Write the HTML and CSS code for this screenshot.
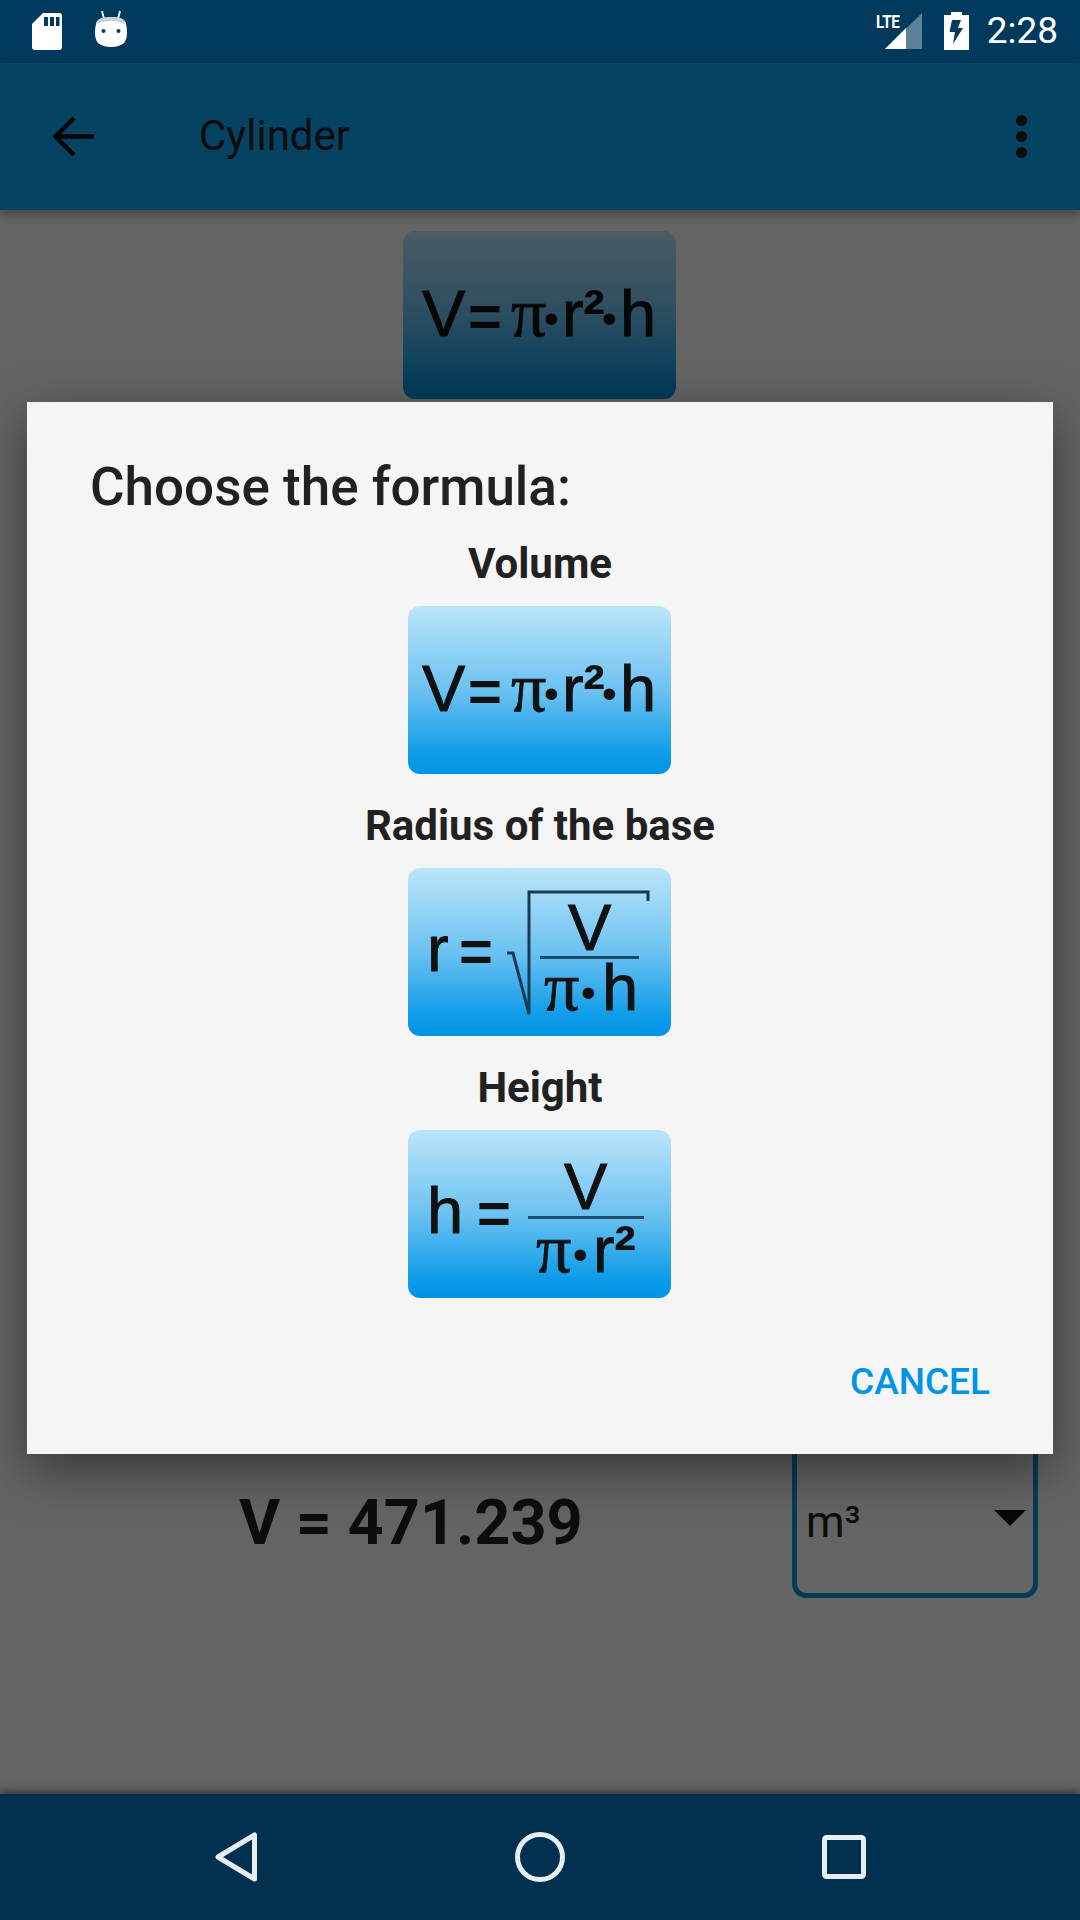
FILE: index.html
```html
<!DOCTYPE html>
<html lang="en">
<head>
<meta charset="utf-8">
<title>Cylinder</title>
<link rel="stylesheet" href="styles.css">
</head>
<body>
<div class="screen">
  <header class="status-bar">
    <div class="status-group">
      <svg class="ic-sd" viewBox="0 0 30 37"><path d="M11 0H27a3 3 0 0 1 3 3V34a3 3 0 0 1-3 3H3a3 3 0 0 1-3-3V11Z" fill="#fff"/><path d="M12 4h4v9h-4ZM18 4h4v9h-4ZM24 4h3.500v9H24Z" fill="#013a5c"/></svg>
      <svg class="ic-droid" viewBox="0 0 32 37"><path d="M7 1 9 9M25 1 23 9" stroke="#fff" stroke-width="1.800"/><path d="M1 14Q2 7 16 7T31 14C33 22 32 30 29 33Q24 37 16 37T3 33C0 30-1 22 1 14Z" fill="#fff"/><path d="M1 14Q2 7 16 7T31 14Q24 11 16 11T1 14Z" fill="#c5d3da"/><circle cx="8.500" cy="21" r="2" fill="#013a5c"/><circle cx="23.500" cy="21" r="2" fill="#013a5c"/></svg>
    </div>
    <div class="status-group right">
      <div class="signal">
        <span class="lte">LTE</span>
        <svg class="ic-signal" viewBox="0 0 37 36"><path d="M37 0V36H0Z" fill="#5a8199"/><path d="M21 15V36H0Z" fill="#fff"/></svg>
      </div>
      <svg class="ic-battery" viewBox="0 0 25 38"><path d="M7 0H18V3H25V38H0V3H7Z" fill="#fff"/><path d="M8 8 17 8 14 16H19L9 32 11 20H5.500Z" fill="#013a5c"/></svg>
      <span class="time">2:28</span>
    </div>
  </header>

  <div class="app">
    <div class="app-bar">
      <svg class="ic-back" viewBox="0 0 41 41"><path d="M41 20.500H4M21 2 2.500 20.500 21 39" fill="none" stroke="#111" stroke-width="4.500"/></svg>
      <h1 class="app-title">Cylinder</h1>
      <div class="overflow"><i></i><i></i><i></i></div>
    </div>
    <main class="content">
      <div class="tile tile-main">
        <svg class="formula" viewBox="0 0 263 168"><text class="f" x="14" y="105">V</text><text class="e" x="60" y="105">=</text><text class="s" x="103" y="105">π</text><text class="d" x="136" y="102">•</text><text class="f" x="154" y="105">r</text><text class="t" x="175" y="105">²</text><text class="d" x="194" y="102">•</text><text class="f" x="212" y="105">h</text></svg>
      </div>
      <div class="result-row">
        <div class="result">V = 471.239</div>
        <div class="unit-select">
          <span class="unit">m³</span>
          <span class="caret"></span>
        </div>
      </div>
    </main>
  </div>

  <nav class="nav-bar">
    <svg class="ic-nav-back" viewBox="0 0 42 50"><path d="M39.500 3V47L3 25Z" fill="none" stroke="#e8edf0" stroke-width="5" stroke-linejoin="round"/></svg>
    <svg class="ic-nav-home" viewBox="0 0 50 50"><circle cx="25" cy="25" r="22.500" fill="none" stroke="#e8edf0" stroke-width="5"/></svg>
    <svg class="ic-nav-recent" viewBox="0 0 44 44"><rect x="2.500" y="2.500" width="39" height="39" rx="2" fill="none" stroke="#e8edf0" stroke-width="5"/></svg>
  </nav>

  <div class="scrim">
    <section class="dialog">
      <h2 class="dialog-title">Choose the formula:</h2>
      <div class="choice">
        <div class="choice-label">Volume</div>
        <div class="tile">
          <svg class="formula" viewBox="0 0 263 168"><text class="f" x="14" y="105">V</text><text class="e" x="60" y="105">=</text><text class="s" x="103" y="105">π</text><text class="d" x="136" y="102">•</text><text class="f" x="154" y="105">r</text><text class="t" x="175" y="105">²</text><text class="d" x="194" y="102">•</text><text class="f" x="212" y="105">h</text></svg>
        </div>
      </div>
      <div class="choice">
        <div class="choice-label">Radius of the base</div>
        <div class="tile">
          <svg class="formula" viewBox="0 0 263 168"><text class="f" x="19" y="103">r</text><text class="e" x="51" y="103">=</text><path class="root" d="M99 85H105L121 146V24H240V33"/><text class="f" x="160" y="82">V</text><rect class="bar" x="132" y="88" width="99" height="3"/><text class="s" x="136" y="142">π</text><text class="d" x="173" y="139">•</text><text class="f" x="194" y="142">h</text></svg>
        </div>
      </div>
      <div class="choice">
        <div class="choice-label">Height</div>
        <div class="tile">
          <svg class="formula" viewBox="0 0 263 168"><text class="f" x="19" y="103">h</text><text class="e" x="69" y="103">=</text><text class="f" x="156" y="79">V</text><rect class="bar" x="120" y="86" width="116" height="3"/><text class="s" x="128" y="142">π</text><text class="d" x="165" y="139">•</text><text class="f" x="185" y="142">r</text><text class="t" x="206" y="142">²</text></svg>
        </div>
      </div>
      <div class="dialog-actions">
        <span class="cancel">CANCEL</span>
      </div>
    </section>
  </div>
</div>
</body>
</html>
```

FILE: styles.css
```css
* { box-sizing: border-box; }
html, body { margin: 0; padding: 0; }
body { width: 1080px; height: 1920px; overflow: hidden; font-family: Roboto, "Liberation Sans", sans-serif; }

.screen { position: relative; width: 1080px; height: 1920px; display: flex; flex-direction: column; background: #fafafa; }

.status-bar { height: 63px; flex: none; background: #013a5c; display: flex; justify-content: space-between; align-items: flex-start; padding: 0 22px 0 32px; }
.status-group { display: flex; align-items: flex-start; }
.ic-sd { width: 30px; height: 37px; margin-top: 13px; }
.ic-droid { width: 32px; height: 37px; margin: 10px 0 0 33px; }
.status-group.right { padding-top: 12px; }
.signal { position: relative; width: 46px; height: 38px; }
.lte { position: absolute; left: 0; top: 2px; color: #fff; font-size: 19px; font-weight: 700; line-height: 16px; letter-spacing: -.5px; transform: scaleX(.8); transform-origin: left; }
.ic-signal { position: absolute; left: 9px; top: 1px; width: 37px; height: 36px; }
.ic-battery { width: 25px; height: 38px; margin-left: 22px; }
.time { margin-left: 18px; color: #fff; font-size: 37px; line-height: 38px; }

.app { flex: 1; display: flex; flex-direction: column; min-height: 0; }
.app-bar { height: 147px; flex: none; background: #11a5f5; display: flex; align-items: center; padding: 0 53px; box-shadow: 0 4px 10px rgba(0,0,0,.35); position: relative; }
.ic-back { width: 41px; height: 41px; flex: none; }
.app-title { margin: 0 0 3px 105px; flex: 1; font-size: 42px; font-weight: 400; color: #212121; }
.overflow { display: flex; flex-direction: column; gap: 5px; }
.overflow i { display: block; width: 11px; height: 11px; border-radius: 50%; background: #212121; }

.content { flex: 1; display: flex; flex-direction: column; align-items: center; justify-content: space-between; padding-top: 21px; padding-bottom: 196px; min-height: 0; }

.tile { width: 263px; height: 168px; border-radius: 12px; background: linear-gradient(#bbe5fa 0%, #6cc2f1 50%, #0f9ce8 88%, #0094e4 100%); }
.tile-main { width: 273px; margin-right: 1px; }
.dialog .tile { margin-right: 1px; }
.formula { display: block; width: 100%; height: 100%; }
.f { font-family: "Liberation Sans", Arial, sans-serif; font-size: 65px; fill: #111; stroke: #111; stroke-width: .9px; }
.e { font-family: "Liberation Sans", Arial, sans-serif; font-size: 58px; font-weight: 700; fill: #111; }
.t { font-family: "Liberation Sans", Arial, sans-serif; font-size: 66px; font-weight: 700; fill: #111; }
.s { font-family: "Liberation Serif", serif; font-size: 70px; fill: #111; stroke: #111; stroke-width: .8px; }
.d { font-family: "Liberation Sans", Arial, sans-serif; font-size: 42px; fill: #111; }
.bar { fill: #1d4a68; }
.root { fill: none; stroke: #1c3a4f; stroke-width: 3; }

.result-row { align-self: stretch; display: flex; align-items: flex-end; }
.result { margin-left: 239px; width: 553px; font-size: 63px; font-weight: 700; color: #212121; margin-bottom: 39px; line-height: 72px; }
.unit-select { position: relative; width: 246px; height: 190px; border: 5px solid #0f94d9; border-radius: 14px; padding: 85px 0 0 9px; }
.unit { font-size: 44px; line-height: 48px; color: #212121; }
.caret { position: absolute; right: 7px; top: 97px; width: 0; height: 0; border-style: solid; border-width: 16px 16px 0; border-color: #111 transparent transparent; }

.nav-bar { height: 126px; flex: none; background: #023050; display: flex; align-items: center; position: relative; z-index: 2; box-shadow: 0 -4px 8px rgba(0,0,0,.4); }
.ic-nav-back { width: 42px; height: 50px; margin-left: 215px; }
.ic-nav-home { width: 50px; height: 50px; margin-left: 258px; }
.ic-nav-recent { width: 44px; height: 44px; margin-left: 257px; }

.scrim { position: absolute; left: 0; right: 0; top: 63px; bottom: 126px; z-index: 1; background: rgba(0,0,0,.6); display: flex; align-items: center; justify-content: center; }
.dialog { width: 1026px; height: 1052px; margin-bottom: 1px; background: #f5f5f5; box-shadow: 0 16px 48px rgba(0,0,0,.45); display: flex; flex-direction: column; align-items: center; padding-top: 55px; }
.dialog-title { align-self: flex-start; margin: 0 0 0 63px; font-size: 53px; font-weight: 500; line-height: 60px; height: 52px; color: #212121; }
.choice { display: flex; flex-direction: column; align-items: center; }
.choice-label { height: 97px; padding-top: 33px; font-size: 42px; font-weight: 700; line-height: 44px; color: #212121; }
.choice + .choice .choice-label { height: 94px; padding-top: 30px; }
.dialog-actions { align-self: stretch; display: flex; justify-content: flex-end; padding: 63px 63px 0 0; }
.cancel { color: #0094e4; font-size: 37px; font-weight: 500; line-height: 42px; }
```
